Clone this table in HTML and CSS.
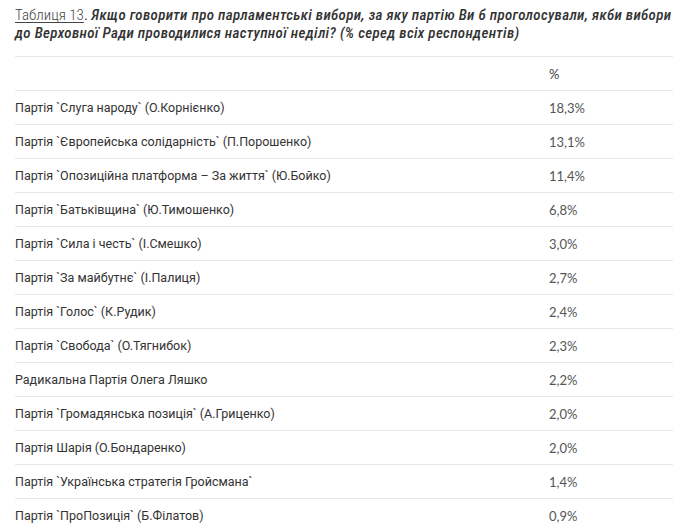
FILE: index.html
```html
<!DOCTYPE html>
<html lang="uk">
<head>
<meta charset="utf-8">
<link rel="stylesheet" href="styles.css">
</head>
<body>
<div class="page">
  <p class="caption"><span class="label">Таблиця 13</span>. <em>Якщо говорити про парламентські вибори, за яку партію Ви б проголосували, якби вибори<br>до Верховної Ради проводилися наступної неділі? (% серед всіх респондентів)</em></p>
  <table class="data">
    <thead>
      <tr><th class="name"></th><th class="val">%</th></tr>
    </thead>
    <tbody>
      <tr><td class="name">Партія `Слуга народу` (О.Корнієнко)</td><td class="val">18,3%</td></tr>
      <tr><td class="name">Партія `Європейська солідарність` (П.Порошенко)</td><td class="val">13,1%</td></tr>
      <tr><td class="name">Партія `Опозиційна платформа – За життя` (Ю.Бойко)</td><td class="val">11,4%</td></tr>
      <tr><td class="name">Партія `Батьківщина` (Ю.Тимошенко)</td><td class="val">6,8%</td></tr>
      <tr><td class="name">Партія `Сила і честь` (І.Смешко)</td><td class="val">3,0%</td></tr>
      <tr><td class="name">Партія `За майбутнє` (І.Палиця)</td><td class="val">2,7%</td></tr>
      <tr><td class="name">Партія `Голос` (К.Рудик)</td><td class="val">2,4%</td></tr>
      <tr><td class="name">Партія `Свобода` (О.Тягнибок)</td><td class="val">2,3%</td></tr>
      <tr><td class="name">Радикальна Партія Олега Ляшко</td><td class="val">2,2%</td></tr>
      <tr><td class="name">Партія `Громадянська позиція` (А.Гриценко)</td><td class="val">2,0%</td></tr>
      <tr><td class="name">Партія Шарія (О.Бондаренко)</td><td class="val">2,0%</td></tr>
      <tr><td class="name">Партія `Українська стратегія Гройсмана`</td><td class="val">1,4%</td></tr>
      <tr><td class="name">Партія `ПроПозиція` (Б.Філатов)</td><td class="val">0,9%</td></tr>
    </tbody>
  </table>
</div>
</body>
</html>
```

FILE: styles.css
```css
html, body {
  margin: 0;
  padding: 0;
  background: #ffffff;
  overflow: hidden;
}
.page {
  padding: 6px 9px 0 15px;
}
.caption {
  margin: 0 0 14px 0;
  height: 36px;
  font-family: "Roboto Condensed", Roboto, "Liberation Sans", sans-serif;
  font-size: 15px;
  line-height: 18px;
  color: #333333;
  white-space: nowrap;
}
.caption .label {
  font-weight: 300;
  color: #444444;
  text-decoration: underline;
  text-underline-offset: 2px;
  text-decoration-thickness: 1px;
}
.caption em {
  font-style: italic;
  font-weight: 500;
  letter-spacing: 0.33px;
}
.data {
  width: 658px;
  border-collapse: collapse;
  border-top: 1px solid #e8e8e8;
}
.data td, .data th {
  height: 33px;
  padding: 0;
  border-bottom: 1px solid #e8e8e8;
  text-align: left;
  vertical-align: middle;
  font-weight: normal;
}
.data .name {
  font-family: Roboto, "Liberation Sans", sans-serif;
  font-size: 12.5px;
  color: #333333;
}
.data .val {
  width: 124px;
  font-family: Lato, "Liberation Sans", sans-serif;
  font-size: 13px;
  color: #555555;
}
.data th.val {
  color: #444444;
}
```
